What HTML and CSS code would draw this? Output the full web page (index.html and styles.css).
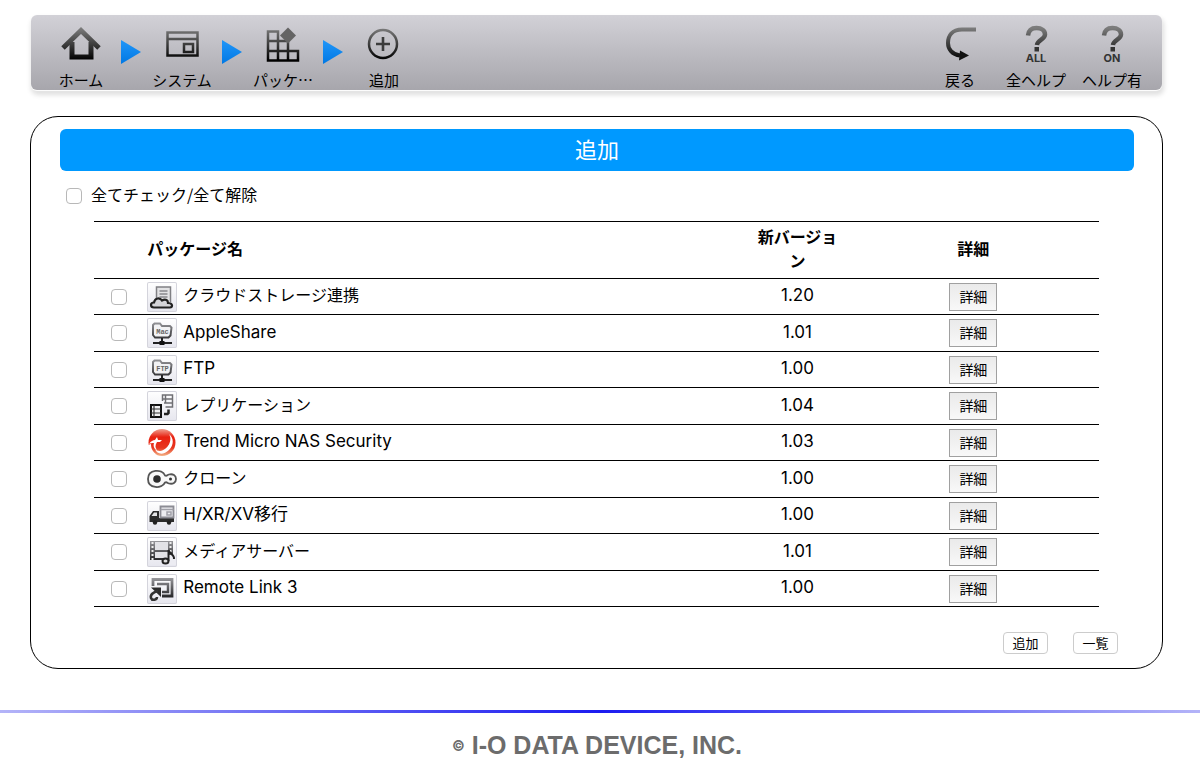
FILE: index.html
```html
<!DOCTYPE html>
<html lang="ja">
<head>
<meta charset="utf-8">
<meta name="viewport" content="width=device-width, initial-scale=1">
<title>追加</title>
<link rel="stylesheet" href="styles.css">
</head>
<body>
<svg class="defs" aria-hidden="true">
  <defs>
    <linearGradient id="ink" gradientUnits="userSpaceOnUse" x1="0" y1="2" x2="0" y2="34"><stop offset="0" stop-color="#7c7c7c"/><stop offset="1" stop-color="#000"/></linearGradient>
    <linearGradient id="soft" gradientUnits="userSpaceOnUse" x1="0" y1="4" x2="0" y2="25"><stop offset="0" stop-color="#98989c"/><stop offset="1" stop-color="#1c1c1e"/></linearGradient>
    <linearGradient id="blue" x1="0" y1="0" x2="0" y2="1"><stop offset="0" stop-color="#2196f8"/><stop offset="1" stop-color="#0078e4"/></linearGradient>
    <linearGradient id="red" x1="0" y1="0" x2="0" y2="1"><stop offset="0" stop-color="#f0a090"/><stop offset="0.3" stop-color="#e82010"/><stop offset="0.7" stop-color="#e83820"/><stop offset="1" stop-color="#f4b488"/></linearGradient>
  </defs>
</svg>

<header class="toolbar">
  <nav class="group">
    <a class="tool" href="#home">
      <svg width="44" height="38" viewBox="0 0 44 38"><path d="M4 22 22 4.500 40 22" fill="none" stroke="url(#ink)" stroke-width="5"/><path d="M13 16v15h19V16" fill="none" stroke="url(#ink)" stroke-width="5"/></svg>
      <span>ホーム</span>
    </a>
    <svg class="arrow" width="25" height="24" viewBox="0 0 25 24" aria-hidden="true"><path d="M2 0v24l20-12z" fill="url(#blue)"/></svg>
    <a class="tool" href="#system">
      <svg width="44" height="38" viewBox="0 0 44 38"><path d="M7.500 6.500h30v23h-30zM7.500 13h30M24 18h9v8h-9z" fill="none" stroke="url(#ink)" stroke-width="2.500"/></svg>
      <span>システム</span>
    </a>
    <svg class="arrow" width="25" height="24" viewBox="0 0 25 24" aria-hidden="true"><path d="M2 0v24l20-12z" fill="url(#blue)"/></svg>
    <a class="tool" href="#package">
      <svg width="44" height="38" viewBox="0 0 44 38"><path d="M7 5.500h10v29H7zM7 15h20v19.500M7 25h30v9.500H7M17 5v29" fill="none" stroke="url(#ink)" stroke-width="2.500"/><path d="m27 1.500 8 8-8 8-8-8z" fill="#646464"/></svg>
      <span>パッケ…</span>
    </a>
    <svg class="arrow" width="25" height="24" viewBox="0 0 25 24" aria-hidden="true"><path d="M2 0v24l20-12z" fill="url(#blue)"/></svg>
    <a class="tool" href="#add">
      <svg width="44" height="38" viewBox="0 0 44 38"><circle cx="21" cy="18" r="14" fill="none" stroke="url(#ink)" stroke-width="2.500"/><path d="M19.700 11h2.600v5.700H28v2.600h-5.700V25h-2.600v-5.700H14v-2.600h5.700z" fill="#3c3c3c"/></svg>
      <span>追加</span>
    </a>
  </nav>
  <nav class="group">
    <a class="tool" href="#back">
      <svg width="44" height="38" viewBox="0 0 44 38"><path d="M38 3.500H24C14 3.500 10 10 10 17c0 6 4 11.500 12 12.500" fill="none" stroke="url(#ink)" stroke-width="4"/><path d="m22 24.500 9 5-10 5z" fill="#111"/></svg>
      <span>戻る</span>
    </a>
    <a class="tool" href="#help-all">
      <svg width="44" height="38" viewBox="0 0 44 38"><path d="M14 9.500C14.500 4.500 17.500 2 22.500 2s8.500 2.500 8.500 6.500c0 5-7.500 5-8 10.500" fill="none" stroke="url(#ink)" stroke-width="4.500"/><path d="M20.500 21H25v4.500h-4.500z" fill="#333"/><text class="tag" x="22" y="36" text-anchor="middle">ALL</text></svg>
      <span>全ヘルプ</span>
    </a>
    <a class="tool" href="#help-on">
      <svg width="44" height="38" viewBox="0 0 44 38"><path d="M14 9.500C14.500 4.500 17.500 2 22.500 2s8.500 2.500 8.500 6.500c0 5-7.500 5-8 10.500" fill="none" stroke="url(#ink)" stroke-width="4.500"/><path d="M20.500 21H25v4.500h-4.500z" fill="#333"/><text class="tag" x="22" y="36" text-anchor="middle">ON</text></svg>
      <span>ヘルプ有</span>
    </a>
  </nav>
</header>

<main class="panel">
  <h1 class="title">追加</h1>
  <label class="check-all"><input class="check" type="checkbox"><span>全てチェック/全て解除</span></label>
  <table class="packages">
    <colgroup><col class="col-check"><col class="col-name"><col class="col-version"><col class="col-detail"></colgroup>
    <thead>
      <tr><th></th><th class="name-head">パッケージ名</th><th>新バージョン</th><th>詳細</th></tr>
    </thead>
    <tbody>
      <tr>
        <td><input class="check" type="checkbox" id="p1"></td>
        <td><label class="name" for="p1"><svg class="icon tile" viewBox="0 0 30 30"><path d="M9.500 18V5h14v15" fill="#e2e2e4" stroke="#808084" stroke-width="1.500"/><path d="M12.500 9h8M12.500 12h8M12.500 15h8" stroke="#88888c" stroke-width="1.500"/><path d="M7 25.500c-4 0-4-5 0-5 1-5 6-5 8-2 4-2 6 0 6 2.500 5 0 5 4.500 2 4.500z" fill="#d4d4d8" stroke="#222" stroke-width="2.200"/></svg><span>クラウドストレージ連携</span></label></td>
        <td><span>1.20</span></td><td><button class="detail" type="button">詳細</button></td>
      </tr>
      <tr>
        <td><input class="check" type="checkbox" id="p2"></td>
        <td><label class="name" for="p2"><svg class="icon tile" viewBox="0 0 30 30"><path d="M8 19.500 6 17V7l1.500-1.500H13L15 8h8l1.500 1.500-1 8-2 2z" fill="#f2f2f4" stroke="url(#soft)" stroke-width="2"/><text class="mini" x="15.500" y="16" text-anchor="middle">Mac</text><path d="M15 20v5M6 25h19" stroke="#222" stroke-width="2"/><path d="M12.500 23h5v4h-5z" fill="#111"/></svg><span class="latin">AppleShare</span></label></td>
        <td><span>1.01</span></td><td><button class="detail" type="button">詳細</button></td>
      </tr>
      <tr>
        <td><input class="check" type="checkbox" id="p3"></td>
        <td><label class="name" for="p3"><svg class="icon tile" viewBox="0 0 30 30"><path d="M8 19.500 6 17V7l1.500-1.500H13L15 8h8l1.500 1.500-1 8-2 2z" fill="#f2f2f4" stroke="url(#soft)" stroke-width="2"/><text class="mini" x="15.500" y="16" text-anchor="middle">FTP</text><path d="M15 20v5M6 25h19" stroke="#222" stroke-width="2"/><path d="M12.500 23h5v4h-5z" fill="#111"/></svg><span class="latin">FTP</span></label></td>
        <td><span>1.00</span></td><td><button class="detail" type="button">詳細</button></td>
      </tr>
      <tr>
        <td><input class="check" type="checkbox" id="p4"></td>
        <td><label class="name" for="p4"><svg class="icon tile" viewBox="0 0 30 30"><path d="M15.500 10V4h10v12h-7M15.500 8h10M17 12h8.500M18.500 4v8" fill="none" stroke="#707074" stroke-width="1.500"/><path d="M4 14h10v12H4z" fill="#f0f0f2" stroke="#111" stroke-width="2"/><path d="M4 18h10M4 22h10M7 14v12" stroke="#333" stroke-width="1.200"/><path d="M21.500 18.500V22l-1 1H17" fill="none" stroke="#222" stroke-width="2.500"/></svg><span>レプリケーション</span></label></td>
        <td><span>1.04</span></td><td><button class="detail" type="button">詳細</button></td>
      </tr>
      <tr>
        <td><input class="check" type="checkbox" id="p5"></td>
        <td><label class="name" for="p5"><svg class="icon" viewBox="0 0 30 30"><circle cx="15" cy="14.500" r="13.500" fill="url(#red)"/><path d="M2 16c2-3 4-4 6-4l2-3 1 3h4l-2 2h-3c-2 3-2 6 0 8-3-1-4-4-3-7-2 0-4 0-5 1z" fill="#fff"/><path d="M22 6c4 6-1 16-9 17-2 0-4-1-5-2 2 6 9 6 14 1 5-5 5-12 0-16z" fill="#fff"/><path d="M1 17c1 5 4 9 9 10-4-3-6-6-6-11z" fill="#fff"/></svg><span class="latin">Trend Micro NAS Security</span></label></td>
        <td><span>1.03</span></td><td><button class="detail" type="button">詳細</button></td>
      </tr>
      <tr>
        <td><input class="check" type="checkbox" id="p6"></td>
        <td><label class="name" for="p6"><svg class="icon" viewBox="0 0 30 30"><path d="M18 11.500C15 4.500 1 5 1 15c0 10 14 10 17 3.500 2-1 2 .5 4 1 4 1 7-1 7-4.500s-3-5.500-7-4.500c-2 .5-2 2-4 1z" fill="#f8f8f8" stroke="#555" stroke-width="1.800"/><circle cx="10" cy="15" r="3.800" fill="#2c2c2c"/><circle cx="23.500" cy="15" r="1.500" fill="#333"/></svg><span>クローン</span></label></td>
        <td><span>1.00</span></td><td><button class="detail" type="button">詳細</button></td>
      </tr>
      <tr>
        <td><input class="check" type="checkbox" id="p7"></td>
        <td><label class="name" for="p7"><svg class="icon tile" viewBox="0 0 30 30"><path d="M2.500 20v-5L6 10h6v7h15v4H2.500z" fill="#2c2c2c"/><path d="m4.500 15 2.500-3.500h3V15z" fill="#e4e4e6"/><path d="M13.500 5.500h13v11h-13z" fill="#ececf0" stroke="#8c8c94" stroke-width="1.800"/><path d="M13.500 8.500h13M20 11h4v3h-4z" fill="none" stroke="#a0a0a8" stroke-width="1.500"/><circle cx="8" cy="21.500" r="2.200" fill="#222"/><circle cx="22" cy="21.500" r="2.200" fill="#222"/></svg><span class="latin">H/XR/XV移行</span></label></td>
        <td><span>1.00</span></td><td><button class="detail" type="button">詳細</button></td>
      </tr>
      <tr>
        <td><input class="check" type="checkbox" id="p8"></td>
        <td><label class="name" for="p8"><svg class="icon tile" viewBox="0 0 30 30"><path d="M3 4h23v19H3z" fill="url(#soft)"/><path d="M8 5h13v8H8zM8 15h13v6H8z" fill="#e2e2e6"/><path d="M5.500 5v18M23.500 5v10" stroke="#eee" stroke-width="2" stroke-dasharray="2 2"/><path d="M20 18h9v10h-9z" fill="#ececf2"/><path d="M21.500 24V13c1 4 6 4 5.500 9" fill="none" stroke="#222" stroke-width="2"/><ellipse cx="18.500" cy="24" rx="3" ry="2.500" fill="#ddd" stroke="#222" stroke-width="2"/></svg><span>メディアサーバー</span></label></td>
        <td><span>1.01</span></td><td><button class="detail" type="button">詳細</button></td>
      </tr>
      <tr>
        <td><input class="check" type="checkbox" id="p9"></td>
        <td><label class="name" for="p9"><svg class="icon tile" viewBox="0 0 30 30"><path d="M6 12V5.500h19V22H15" fill="none" stroke="url(#soft)" stroke-width="2.800"/><path d="M10 10h11v8h-6" fill="none" stroke="url(#soft)" stroke-width="2.500"/><path d="M4 13.500h10V23z" fill="#2c2c2c"/><path d="M11 17c-5 1-8 4-7 7 1 3 6 2 6-1" fill="none" stroke="#333" stroke-width="2.500"/></svg><span class="latin">Remote Link 3</span></label></td>
        <td><span>1.00</span></td><td><button class="detail" type="button">詳細</button></td>
      </tr>
    </tbody>
  </table>
  <div class="actions">
    <button class="action" type="button">追加</button>
    <button class="action" type="button">一覧</button>
  </div>
</main>

<footer class="footer"><small>©</small> I-O DATA DEVICE, INC.</footer>
</body>
</html>
```
FILE: styles.css
```css
* { box-sizing: border-box; }
body {
  margin: 0;
  padding-top: 15px;
  background: #fff;
  color: #000;
  font-family: "Noto Sans CJK JP", sans-serif;
  font-size: 16px;
  line-height: 24px;
}
.defs { position: absolute; width: 0; height: 0; }

.toolbar {
  display: flex;
  justify-content: space-between;
  margin: 0 38px 0 31px;
  padding: 11px 12px 0;
  height: 75px;
  border-radius: 6px;
  background: linear-gradient(#d2d1d7, #a7a6ac);
  box-shadow: 0 1px 1px #fff, 1px 4px 5px 1px rgba(0, 0, 0, 0.13);
}
.group { display: flex; }
.tool {
  display: flex;
  flex-direction: column;
  align-items: center;
  width: 76px;
  color: #000;
  font-size: 15px;
  line-height: 22px;
  text-decoration: none;
  white-space: nowrap;
}
.tool svg { overflow: visible; }
.tool span { margin-top: 5px; }
.arrow { margin-top: 14px; }
.tag { font: bold 11px/13px Inter, sans-serif; fill: #333; }

.panel {
  margin: 26px 37px 0 30px;
  padding: 12px 28px 13px 29px;
  border: 1px solid #000;
  border-radius: 28px;
}
.title {
  margin: 0;
  padding-bottom: 4px;
  border-radius: 6px;
  background: #0099ff;
  color: #fff;
  font-size: 22px;
  font-weight: 400;
  line-height: 38px;
  text-align: center;
}
.check-all {
  display: flex;
  align-items: center;
  gap: 9px;
  width: max-content;
  margin: 13px 0 13px 6px;
}
.check-all span { padding-bottom: 3px; line-height: 21px; }
.check {
  appearance: none;
  display: block;
  width: 16px;
  height: 16px;
  margin: 0;
  border: 1px solid #b8b8b8;
  border-radius: 4px;
  background: #fff;
}
.check:checked { background: #0099ff; }

.packages {
  width: calc(100% - 69px);
  margin-left: 34px;
  border-collapse: collapse;
  table-layout: fixed;
  text-align: center;
}
.col-check { width: 5%; }
.col-name { width: 60%; }
.col-version { width: 10%; }
.col-detail { width: 25%; }
.packages tr { height: 37px; border-bottom: 1px solid #000; }
.packages tbody tr:nth-child(odd) { height: 36px; }
.packages thead tr { height: 57px; border-top: 1px solid #000; }
.packages th { padding: 1px 4px 5px; font-weight: 700; }
.packages .name-head { padding-left: 3px; text-align: left; }
.packages td { padding: 0 3px; font-family: Inter, "Noto Sans CJK JP", sans-serif; font-size: 17px; }
.packages td span { display: block; padding-bottom: 3px; }
.packages td .check { margin: 0 auto; }
.name { display: flex; align-items: center; gap: 6px; font-size: 16px; }
.latin { font-size: 17px; }
.icon { width: 30px; height: 30px; }
.tile {
  border-radius: 2px;
  background: linear-gradient(#fff, #e6e6ee);
  box-shadow: inset 0 0 0 1px #d4d4dc;
}
.mini { font: bold 7px "Liberation Mono", monospace; fill: #666; }
.detail {
  display: block;
  width: 48px;
  height: 28px;
  margin: 0 auto;
  padding: 0 0 2px;
  border: 1px solid #a0a0a0;
  background: linear-gradient(#eaeaea, #f8f8f8);
  color: #000;
  font: 14px "Noto Sans CJK JP", sans-serif;
}
.actions {
  display: flex;
  justify-content: flex-end;
  gap: 25px;
  margin: 25px 16px 0 0;
}
.action {
  width: 45px;
  height: 22px;
  margin-bottom: 1px;
  padding: 0;
  border: 1px solid #ccc;
  border-radius: 4px;
  background: #fff;
  color: #000;
  font: 13px/20px "Noto Sans CJK JP", sans-serif;
}

.footer {
  margin-top: 41px;
  padding: 18px 6px 0 0;
  border-top: 3px solid;
  border-image: linear-gradient(90deg, #b4b4f8, #1c1cf0 50%, #b4b4f8) 1;
  color: #6c6c6c;
  font: bold 25px/28px "Liberation Sans", sans-serif;
  text-align: center;
}
.footer small { font-family: Inter, sans-serif; font-size: 14px; vertical-align: 3px; }
```
